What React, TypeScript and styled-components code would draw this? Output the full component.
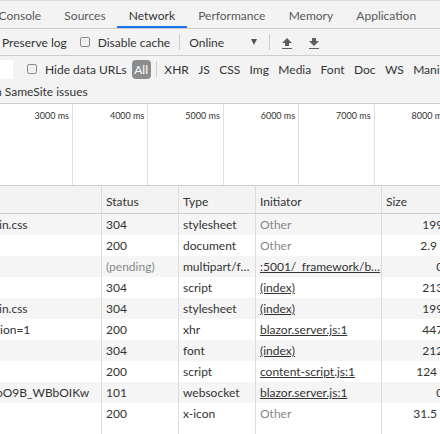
import React from 'react'
import styled, { createGlobalStyle } from 'styled-components'

type RowType = {
  name: string
  nameShift?: number
  status: string
  pending?: boolean
  type: string
  initiator: string
  link: boolean
  size: string
}

const tabs = ['Console', 'Sources', 'Network', 'Performance', 'Memory', 'Application']
const filters = ['XHR', 'JS', 'CSS', 'Img', 'Media', 'Font', 'Doc', 'WS', 'Manifest']
const ticks = ['3000 ms', '4000 ms', '5000 ms', '6000 ms', '7000 ms', '8000 ms']

const rows: RowType[] = [
  { name: 'in.css', nameShift: -1, status: '304', type: 'stylesheet', initiator: 'Other', link: false, size: '199 B' },
  { name: '', status: '200', type: 'document', initiator: 'Other', link: false, size: '2.9 kB' },
  { name: '', status: '(pending)', pending: true, type: 'multipart/f…', initiator: ':5001/_framework/b…', link: true, size: '0 B' },
  { name: '', status: '304', type: 'script', initiator: '(index)', link: true, size: '213 B' },
  { name: 'in.css', nameShift: -1, status: '304', type: 'stylesheet', initiator: '(index)', link: true, size: '199 B' },
  { name: 'ion=1', nameShift: 0, status: '200', type: 'xhr', initiator: 'blazor.server.js:1', link: true, size: '447 B' },
  { name: '', status: '304', type: 'font', initiator: '(index)', link: true, size: '212 B' },
  { name: '', status: '200', type: 'script', initiator: 'content-script.js:1', link: true, size: '124 kB' },
  { name: 'bO9B_WBbOIKw', nameShift: -4, status: '101', type: 'websocket', initiator: 'blazor.server.js:1', link: true, size: '0 B' },
  { name: '', status: '200', type: 'x-icon', initiator: 'Other', link: false, size: '31.5 kB' },
]

const UpIcon = () => (
  <svg width="10" height="12" viewBox="0 0 10 12">
    <path d="M5 0 L10 5 H7 V8 H3 V5 H0 Z" fill="#5f5f5f" />
    <rect x="0" y="10" width="10" height="1" fill="#5f5f5f" />
  </svg>
)

const DownIcon = () => (
  <svg width="10" height="12" viewBox="0 0 10 12">
    <path d="M3 0 H7 V3 H10 L5 8 L0 3 H3 Z" fill="#5f5f5f" />
    <rect x="0" y="10" width="10" height="1" fill="#5f5f5f" />
  </svg>
)

const App: React.FC = function () {
  return (
    <Page>
      <GlobalStyle />
      <TabBar>
        <TabStrip>
          {tabs.map((t) => (
            <Tab key={t} $active={t === 'Network'}>{t}</Tab>
          ))}
        </TabStrip>
      </TabBar>
      <Toolbar>
        <ToolLabel $shift={2}>Preserve log</ToolLabel>
        <Checkbox $gap={13} />
        <ToolLabel>Disable cache</ToolLabel>
        <Separator $left={9} $right={9} />
        <Throttle>
          Online
          <Caret />
        </Throttle>
        <Separator $left={9} $right={9} />
        <IconButton $left={3}><UpIcon /></IconButton>
        <IconButton $left={17}><DownIcon /></IconButton>
      </Toolbar>
      <FilterArea>
        <FilterRow>
          <FilterInput />
          <Checkbox $gap={14} />
          <ToolLabel>Hide data URLs</ToolLabel>
          <AllPill>All</AllPill>
          <Separator $left={5} $right={3} />
          {filters.map((f) => (
            <FilterButton key={f}>{f}</FilterButton>
          ))}
        </FilterRow>
        <SameSiteRow>n SameSite issues</SameSiteRow>
      </FilterArea>
      <Overview>
        {ticks.map((t, i) => (
          <Division key={t} $first={i === 0}>{t}</Division>
        ))}
      </Overview>
      <Grid>
        <HeaderRow>
          <HeadCell />
          <HeadCell>Status</HeadCell>
          <HeadCell>Type</HeadCell>
          <HeadCell>Initiator</HeadCell>
          <HeadCell>Size</HeadCell>
        </HeaderRow>
        {rows.map((r, i) => (
          <DataRow key={i} $odd={i % 2 === 0}>
            <NameCell>
              <NameText $shift={r.nameShift || 0}>{r.name}</NameText>
            </NameCell>
            <Cell $muted={r.pending}>{r.status}</Cell>
            <Cell>{r.type}</Cell>
            <Cell $muted={!r.link}>
              {r.link ? <Link>{r.initiator}</Link> : r.initiator}
            </Cell>
            <SizeCell>{r.size}</SizeCell>
          </DataRow>
        ))}
        <FillerRow>
          <Cell />
          <Cell />
          <Cell />
          <Cell />
          <SizeCell />
        </FillerRow>
      </Grid>
    </Page>
  )
}

const GlobalStyle = createGlobalStyle`
  html, body {
    margin: 0;
    padding: 0;
    background: #ffffff;
  }
  body {
    font-family: Lato, "Open Sans", "Liberation Sans", sans-serif;
    font-size: 12px;
    color: #333333;
  }
`

const Page = styled.div`
  width: 440px;
  height: 434px;
  overflow: hidden;
  display: flex;
  flex-direction: column;
  background: #ffffff;
`

const TabBar = styled.div`
  height: 27px;
  flex-shrink: 0;
  background: #f3f3f3;
  border-top: 1px solid #dcdcdc;
  border-bottom: 1px solid #cccccc;
  display: flex;
`

const TabStrip = styled.div`
  display: flex;
  margin-left: -13px;
`

const Tab = styled.div<{ $active: boolean }>`
  flex-shrink: 0;
  padding: 1px 11.6px 0;
  display: flex;
  align-items: center;
  white-space: nowrap;
  color: ${(p) => (p.$active ? '#333333' : '#5a5a5a')};
  box-shadow: ${(p) => (p.$active ? 'inset 0 -2px 0 #1a73e8' : 'none')};
`

const Toolbar = styled.div`
  height: 26px;
  flex-shrink: 0;
  background: #f3f3f3;
  border-bottom: 1px solid #cccccc;
  display: flex;
  align-items: center;
  white-space: nowrap;
  & > * {
    flex-shrink: 0;
  }
`

const ToolLabel = styled.span<{ $shift?: number }>`
  margin-left: ${(p) => p.$shift || 0}px;
  color: #333333;
`

const Checkbox = styled.span<{ $gap: number }>`
  display: inline-block;
  width: 8px;
  height: 8px;
  margin-left: ${(p) => p.$gap}px;
  margin-right: 8px;
  border: 1px solid #8a8a8a;
  border-radius: 2px;
  background: #f0f0f0;
`

const Separator = styled.span<{ $left: number; $right: number }>`
  display: inline-block;
  width: 1px;
  height: 16px;
  background: #cccccc;
  margin-left: ${(p) => p.$left}px;
  margin-right: ${(p) => p.$right}px;
`

const Throttle = styled.span`
  display: flex;
  align-items: center;
  color: #333333;
`

const Caret = styled.span`
  width: 0;
  height: 0;
  margin-left: 27px;
  margin-right: 3px;
  border-left: 3px solid transparent;
  border-right: 3px solid transparent;
  border-top: 6px solid #555555;
`

const IconButton = styled.span<{ $left: number }>`
  display: flex;
  align-items: center;
  margin-left: ${(p) => p.$left}px;
  margin-top: 3px;
`

const FilterArea = styled.div`
  flex-shrink: 0;
  background: #f3f3f3;
  border-bottom: 1px solid #cccccc;
`

const FilterRow = styled.div`
  height: 26px;
  display: flex;
  align-items: center;
  white-space: nowrap;
  & > * {
    flex-shrink: 0;
  }
`

const FilterInput = styled.span`
  display: inline-block;
  width: 13px;
  height: 19px;
  background: #ffffff;
`

const AllPill = styled.span`
  display: inline-flex;
  align-items: center;
  justify-content: center;
  width: 19px;
  height: 19px;
  margin-left: 5px;
  border-radius: 4px;
  background: #8c8c8c;
  color: #ffffff;
`

const FilterButton = styled.span`
  padding: 0 4.7px;
  color: #333333;
`

const SameSiteRow = styled.div`
  height: 21px;
  line-height: 19px;
  margin-left: -5px;
  white-space: nowrap;
  color: #333333;
`

const Overview = styled.div`
  height: 81px;
  flex-shrink: 0;
  display: flex;
  background: #ffffff;
`

const Division = styled.div<{ $first: boolean }>`
  flex-shrink: 0;
  box-sizing: border-box;
  width: ${(p) => (p.$first ? '73px' : '75.4px')};
  border-right: 1px solid #e0e0e0;
  padding: 6px 3px 0 0;
  text-align: right;
  font-size: 9px;
  line-height: 12px;
  white-space: nowrap;
  color: #333333;
`

const Grid = styled.div`
  flex: 1;
  display: flex;
  flex-direction: column;
  min-height: 0;
`

const columns = '102px 77px 77px 126px 76px'

const HeaderRow = styled.div`
  display: grid;
  grid-template-columns: ${columns};
  height: 27px;
  background: #f3f3f3;
  border-top: 1px solid #cccccc;
  border-bottom: 1px solid #cccccc;
`

const HeadCell = styled.div`
  box-sizing: border-box;
  border-right: 1px solid #dddddd;
  padding: 3px 4px 0;
  display: flex;
  align-items: center;
  white-space: nowrap;
  color: #333333;
`

const DataRow = styled.div<{ $odd: boolean }>`
  display: grid;
  grid-template-columns: ${columns};
  height: 21px;
  flex-shrink: 0;
  background: ${(p) => (p.$odd ? '#f5f5f5' : '#ffffff')};
`

const FillerRow = styled.div`
  display: grid;
  grid-template-columns: ${columns};
  flex: 1;
`

const Cell = styled.div<{ $muted?: boolean }>`
  box-sizing: border-box;
  border-right: 1px solid #dddddd;
  padding: 0 4px;
  display: flex;
  align-items: center;
  white-space: nowrap;
  overflow: hidden;
  color: ${(p) => (p.$muted ? '#888888' : '#333333')};
`

const NameCell = styled(Cell)`
  padding: 0;
`

const NameText = styled.span<{ $shift: number }>`
  margin-left: ${(p) => p.$shift}px;
`

const SizeCell = styled(Cell)`
  justify-content: flex-end;
  border-right: none;
  overflow: visible;
`

const Link = styled.span`
  text-decoration: underline;
  color: #333333;
`

export default App
